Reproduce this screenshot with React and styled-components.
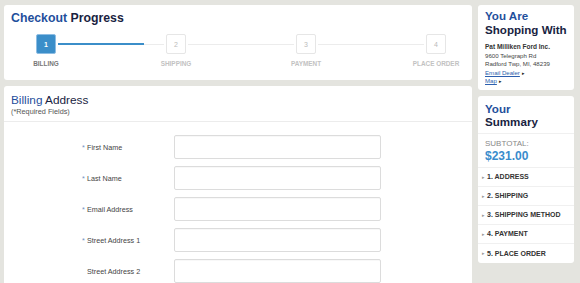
import React from "react";
import styled, { createGlobalStyle } from "styled-components";

const steps = ["Billing", "Shipping", "Payment", "Place Order"];

const fields = [
  { label: "First Name", required: true },
  { label: "Last Name", required: true },
  { label: "Email Address", required: true },
  { label: "Street Address 1", required: true },
  { label: "Street Address 2", required: false },
];

const summary = [
  "1. Address",
  "2. Shipping",
  "3. Shipping Method",
  "4. Payment",
  "5. Place Order",
];

const App = () => {
  return (
    <>
      <GlobalStyle />
      <Page>
        <Main>
          <ProgressPanel>
            <PanelTitle>
              <Blue>Checkout</Blue> Progress
            </PanelTitle>
            <Steps>
              <Track>
                <TrackFill style={{ width: "25%" }} />
              </Track>
              {steps.map((step, index) => (
                <Step key={step}>
                  <StepBox $active={index === 0}>{index + 1}</StepBox>
                  <StepLabel $active={index === 0}>{step}</StepLabel>
                </Step>
              ))}
            </Steps>
          </ProgressPanel>

          <FormPanel>
            <FormHeader>
              <FormTitle>
                <Blue>Billing</Blue> Address
              </FormTitle>
              <Hint>(*Required Fields)</Hint>
            </FormHeader>
            <Form>
              {fields.map((field) => (
                <React.Fragment key={field.label}>
                  <Label>
                    <Req>{field.required ? "*" : ""}</Req>
                    {field.label}
                  </Label>
                  <Input type="text" />
                </React.Fragment>
              ))}
            </Form>
          </FormPanel>
        </Main>

        <Side>
          <DealerPanel>
            <SideTitle>
              <Blue>You Are</Blue>
              <br />
              Shopping With
            </SideTitle>
            <Address>
              <strong>Pat Milliken Ford Inc.</strong>
              <span>9600 Telegraph Rd</span>
              <span>Radford Twp, MI, 48239</span>
              <span>
                <DealerLink href="#">Email Dealer</DealerLink> <Arrow>▸</Arrow>
              </span>
              <span>
                <DealerLink href="#">Map</DealerLink> <Arrow>▸</Arrow>
              </span>
            </Address>
          </DealerPanel>

          <SummaryPanel>
            <SummaryHead>
              <SideTitle>
                <Blue>Your</Blue>
                <br />
                Summary
              </SideTitle>
            </SummaryHead>
            <Subtotal>
              <span>SUBTOTAL:</span>
              <strong>$231.00</strong>
            </Subtotal>
            {summary.map((item) => (
              <SummaryItem key={item}>
                <Caret>▸</Caret>
                {item}
              </SummaryItem>
            ))}
          </SummaryPanel>
        </Side>
      </Page>
    </>
  );
};

export default App;

const GlobalStyle = createGlobalStyle`
  body {
    margin: 0;
    background: #e4e4df;
    font-family: "Liberation Sans", Arial, sans-serif;
    overflow: hidden;
  }
`;

const Page = styled.div`
  display: flex;
  align-items: flex-start;
  gap: 6px;
  padding: 5px 6px 0 4px;
`;

const Main = styled.div`
  width: 468px;
  display: flex;
  flex-direction: column;
  gap: 6px;
`;

const Side = styled.aside`
  width: 96px;
  display: flex;
  flex-direction: column;
  gap: 6px;
`;

const Panel = styled.section`
  background: #fff;
  border-radius: 3px;
`;

const Blue = styled.span`
  color: #1f4f9c;
`;

const PanelTitle = styled.h2`
  margin: 0;
  font-size: 12.3px;
  font-weight: 700;
  color: #19233f;
  line-height: 18px;
`;

const SideTitle = styled(PanelTitle)`
  font-size: 11.6px;
  line-height: 13.5px;
  white-space: nowrap;
`;

const ProgressPanel = styled(Panel)`
  height: 75px;
  box-sizing: border-box;
  padding: 4px 7px 0;
`;

const Steps = styled.div`
  position: relative;
  display: flex;
  justify-content: space-between;
  margin: 7px 4px 0 10px;
`;

const Track = styled.div`
  position: absolute;
  top: 10px;
  left: 25px;
  right: 25px;
  height: 1px;
  background: #ececec;
`;

const TrackFill = styled.div`
  height: 2px;
  margin-top: -1px;
  background: #3b8ec9;
`;

const Step = styled.div`
  position: relative;
  width: 50px;
  display: flex;
  flex-direction: column;
  align-items: center;
`;

const StepBox = styled.div`
  width: 20px;
  height: 20px;
  box-sizing: border-box;
  display: flex;
  align-items: center;
  justify-content: center;
  font-size: 7px;
  font-weight: ${(p) => (p.$active ? 700 : 400)};
  color: ${(p) => (p.$active ? "#fff" : "#bbb")};
  background: ${(p) => (p.$active ? "#3b8ec9" : "#fff")};
  border: 1px solid ${(p) => (p.$active ? "#8dbde3" : "#e6e6e6")};
  border-radius: 2px;
  box-shadow: 0 0 0 2px #fff;
`;

const StepLabel = styled.div`
  margin-top: 5px;
  font-size: 6.4px;
  line-height: 9px;
  font-weight: 700;
  text-transform: uppercase;
  white-space: nowrap;
  color: ${(p) => (p.$active ? "#777" : "#c2c2c2")};
`;

const FormPanel = styled(Panel)`
  height: 230px;
`;

const FormHeader = styled.div`
  padding: 7px 7px 5px;
  border-bottom: 1px solid #ececec;
`;

const FormTitle = styled.h2`
  margin: 0;
  font-size: 11.8px;
  font-weight: 400;
  line-height: 14px;
  color: #19233f;
`;

const Hint = styled.div`
  font-size: 7.3px;
  line-height: 9px;
  color: #555;
`;

const Form = styled.div`
  display: grid;
  grid-template-columns: 92px 207px;
  row-gap: 7px;
  align-items: center;
  padding: 13px 0 0 78px;
`;

const Label = styled.label`
  padding-left: 5px;
  font-size: 7.2px;
  color: #444;
`;

const Req = styled.span`
  display: inline-block;
  width: 5px;
  margin-left: -5px;
  color: #6f8fbf;
`;

const Input = styled.input`
  height: 24px;
  box-sizing: border-box;
  border: 1px solid #dcdcdc;
  border-radius: 2px;
  background: #fff;
  box-shadow: inset 0 1px 1px rgba(0, 0, 0, 0.03);
  outline: none;
`;

const DealerPanel = styled(Panel)`
  padding: 4px 7px 4px;
`;

const Address = styled.div`
  display: flex;
  flex-direction: column;
  margin-top: 7px;
  font-size: 6.1px;
  line-height: 8.5px;
  color: #444;
  white-space: nowrap;

  strong {
    font-size: 6.5px;
    color: #333;
  }
`;

const DealerLink = styled.a`
  color: #2d5fae;
  text-decoration: underline;
`;

const Arrow = styled.span`
  font-size: 5px;
  color: #222;
`;

const SummaryPanel = styled(Panel)`
  padding-bottom: 0;
`;

const SummaryHead = styled.div`
  padding: 6px 7px 4px;
  border-bottom: 1px solid #f0f0f0;
`;

const Subtotal = styled.div`
  display: flex;
  flex-direction: column;
  padding: 4px 7px 3px;
  border-bottom: 1px solid #f0f0f0;

  span {
    font-size: 8px;
    line-height: 11px;
    color: #888;
  }

  strong {
    font-size: 12px;
    line-height: 15px;
    color: #3a8ccc;
  }
`;

const SummaryItem = styled.div`
  height: 19px;
  box-sizing: border-box;
  display: flex;
  align-items: center;
  gap: 2px;
  padding-left: 4px;
  font-size: 7px;
  font-weight: 700;
  color: #333;
  text-transform: uppercase;
  border-bottom: 1px solid #f0f0f0;

  &:last-child {
    border-bottom: none;
  }
`;

const Caret = styled.span`
  font-size: 5px;
  color: #999;
  font-weight: 400;
`;
